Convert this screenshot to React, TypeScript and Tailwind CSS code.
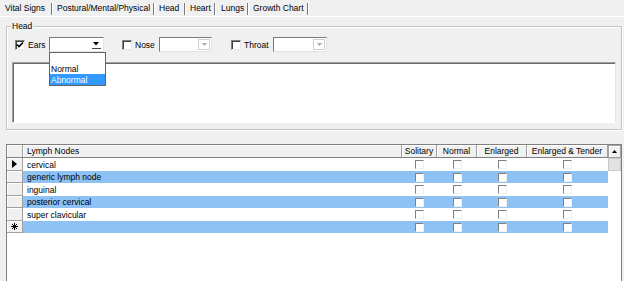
import React from 'react';

const tabs = [
  { label: 'Vital Signs', cls: 'w-[53px] pl-[5px]' },
  { label: 'Postural/Mental/Physical', cls: 'w-[102px] pl-[4px]' },
  { label: 'Head', cls: 'w-[31px] pl-[4px]' },
  { label: 'Heart', cls: 'w-[30px] pl-[4px]' },
  { label: 'Lungs', cls: 'w-[33px] pl-[5px]' },
  { label: 'Growth Chart', cls: 'w-[60px] pl-[4px]' },
];

const rows = [
  { name: 'cervical', blue: false, tall: true, ind: 'arrow' },
  { name: 'generic lymph node', blue: true, tall: false, ind: '' },
  { name: 'inguinal', blue: false, tall: true, ind: '' },
  { name: 'posterior cervical', blue: true, tall: false, ind: '' },
  { name: 'super clavicular', blue: false, tall: true, ind: '' },
  { name: '', blue: true, tall: false, ind: 'star' },
];

function Box({ checked = false, cls = '' }: { checked?: boolean; cls?: string }) {
  return (
    <span className={`${cls} relative block w-[10px] h-[10px] shrink-0 bg-white border-t border-l border-[#808080] border-b border-r border-b-[#e6e6e6] border-r-[#e6e6e6] shadow-[inset_1px_1px_0_#404040]`}>
      {checked && (
        <svg className="absolute left-[0px] top-[0px]" width="8" height="8" viewBox="0 0 8 8">
          <path d="M1 3.5 L3 5.5 L7 1.5" stroke="#000" strokeWidth="1.6" fill="none" />
        </svg>
      )}
    </span>
  );
}

function GridBox() {
  return (
    <span className="block w-[9px] h-[9px] bg-white border-t border-l border-[#808080] border-b border-r border-b-[#f0f0f0] border-r-[#f0f0f0]" />
  );
}

function Combo({ w, active = false }: { w: string; active?: boolean }) {
  return (
    <div className={`${w} h-[15px] bg-white border-t border-l border-[#7a7a7a] border-b border-r border-b-[#e3e3e3] border-r-[#e3e3e3] flex justify-end items-stretch`}>
      {active ? (
        <div className="w-[12px] flex flex-col items-center justify-center mr-[1px]">
          <svg width="6" height="4" viewBox="0 0 6 4" className="mt-[2px]">
            <path d="M0 0 L6 0 L3 3.5 Z" fill="#000" />
          </svg>
          <span className="w-[9px] h-px bg-[#404040] mt-[2px]" />
        </div>
      ) : (
        <div className="w-[12px] my-[1px] mr-[1px] border border-[#d0d0d0] bg-white flex items-center justify-center">
          <svg width="5" height="3" viewBox="0 0 5 3">
            <path d="M0 0 L5 0 L2.5 3 Z" fill="#a8a8a8" />
          </svg>
        </div>
      )}
    </div>
  );
}

export default function App() {
  return (
    <div className="w-[624px] h-[281px] overflow-hidden bg-[#f0f0f0] text-black font-['Liberation_Sans',Arial,sans-serif] text-[8.5px] leading-[10px] flex flex-col">
      {/* tab strip */}
      <div className="h-[17px] shrink-0 flex items-center border-b border-white">
        {tabs.map((t) => (
          <div key={t.label} className={`${t.cls} h-full flex items-center justify-between`}>
            <span className="whitespace-nowrap">{t.label}</span>
            <span className="flex h-[12px] mt-[2px]">
              <span className="w-px h-full bg-[#7a7a7a]" />
              <span className="w-px h-full bg-white" />
            </span>
          </div>
        ))}
      </div>

      {/* group box */}
      <div className="relative ml-[6px] mt-[9px] w-[616px] h-[104px] shrink-0 border border-[#c4c4c4] shadow-[inset_1px_1px_0_#ffffff,1px_1px_0_#ffffff]">
        <span className="absolute left-[4px] top-[-6px] px-[1px] bg-[#f0f0f0] leading-[10px]">Head</span>
        <div className="flex items-center pl-[8px] pt-[10px]">
          <Box checked />
          <span className="ml-[3px] w-[21px]">Ears</span>
          <Combo w="w-[55px]" active />
          <Box cls="ml-[18px]" />
          <span className="ml-[3px] w-[24px]">Nose</span>
          <Combo w="w-[53px]" />
          <Box cls="ml-[19px]" />
          <span className="ml-[3px] w-[29px]">Throat</span>
          <Combo w="w-[54px]" />
        </div>
        <div className="ml-[5px] mt-[10px] w-[604px] h-[61px] bg-white border-t border-l border-[#a0a0a0] border-b border-r border-b-[#ffffff] border-r-[#e3e3e3] shadow-[inset_1px_1px_0_#696969]" />
        {/* dropdown list */}
        <div className="absolute left-[42px] top-[25px] w-[57px] h-[34px] bg-white border border-[#646464] flex flex-col">
          <div className="h-[11px]" />
          <div className="h-[10px] pl-[1px] flex items-center">Normal</div>
          <div className="h-[11px] pl-[1px] flex items-center bg-[#3399ff] text-white">Abnormal</div>
        </div>
      </div>

      {/* data grid */}
      <div className="ml-[6px] mt-[14px] w-[616px] h-[140px] shrink-0 border border-[#808080] bg-white flex">
        <div className="w-[601px] flex flex-col">
          {/* header */}
          <div className="h-[13px] flex bg-[#f0f0f0] border-b border-[#808080]">
            <div className="w-[16px] border-r border-[#a0a0a0] shadow-[inset_1px_1px_0_#ffffff]" />
            <div className="w-[379px] border-r border-[#a0a0a0] pl-[4px] flex items-center shadow-[inset_1px_1px_0_#ffffff]">Lymph Nodes</div>
            <div className="w-[35px] border-r border-[#a0a0a0] flex items-center justify-center shadow-[inset_1px_1px_0_#ffffff]">Solitary</div>
            <div className="w-[40px] border-r border-[#a0a0a0] flex items-center justify-center shadow-[inset_1px_1px_0_#ffffff]">Normal</div>
            <div className="w-[50px] border-r border-[#a0a0a0] flex items-center justify-center shadow-[inset_1px_1px_0_#ffffff]">Enlarged</div>
            <div className="w-[81px] border-r border-[#a0a0a0] flex items-center justify-center shadow-[inset_1px_1px_0_#ffffff] whitespace-nowrap">Enlarged &amp; Tender</div>
          </div>
          {rows.map((r, i) => (
            <div key={i} className={`${r.tall ? 'h-[13px]' : 'h-[12px]'} flex`}>
              <div className="w-[16px] bg-[#f0f0f0] border-r border-b border-[#a0a0a0] shadow-[inset_1px_1px_0_#ffffff] flex items-center justify-center">
                {r.ind === 'arrow' && (
                  <svg width="5" height="8" viewBox="0 0 5 8">
                    <path d="M0 0 L5 4 L0 8 Z" fill="#000" />
                  </svg>
                )}
                {r.ind === 'star' && (
                  <svg width="7" height="7" viewBox="0 0 7 7">
                    <path d="M3.5 0 V7 M0 3.5 H7 M1 1 L6 6 M6 1 L1 6" stroke="#000" strokeWidth="1" />
                  </svg>
                )}
              </div>
              <div className={`flex-1 flex ${r.blue ? 'bg-[#8ec2f4]' : 'bg-white'}`}>
                <div className="w-[379px] pl-[4px] flex items-center whitespace-nowrap">{r.name}</div>
                <div className="w-[35px] flex items-center justify-center"><GridBox /></div>
                <div className="w-[40px] flex items-center justify-center"><GridBox /></div>
                <div className="w-[50px] flex items-center justify-center"><GridBox /></div>
                <div className="w-[81px] flex items-center justify-center"><GridBox /></div>
              </div>
            </div>
          ))}
          <div className="flex-1 bg-white" />
        </div>
        {/* scrollbar */}
        <div className="w-[13px] flex flex-col">
          <div className="h-[13px] bg-[#f0f0f0] border border-[#a0a0a0] shadow-[inset_1px_1px_0_#ffffff] flex items-center justify-center">
            <svg width="5" height="3" viewBox="0 0 5 3">
              <path d="M0 3 L5 3 L2.5 0 Z" fill="#000" />
            </svg>
          </div>
          <div className="h-[13px] bg-[#e2e2e2] border border-[#c8c8c8]" />
          <div className="flex-1 bg-white" />
        </div>
      </div>
    </div>
  );
}
